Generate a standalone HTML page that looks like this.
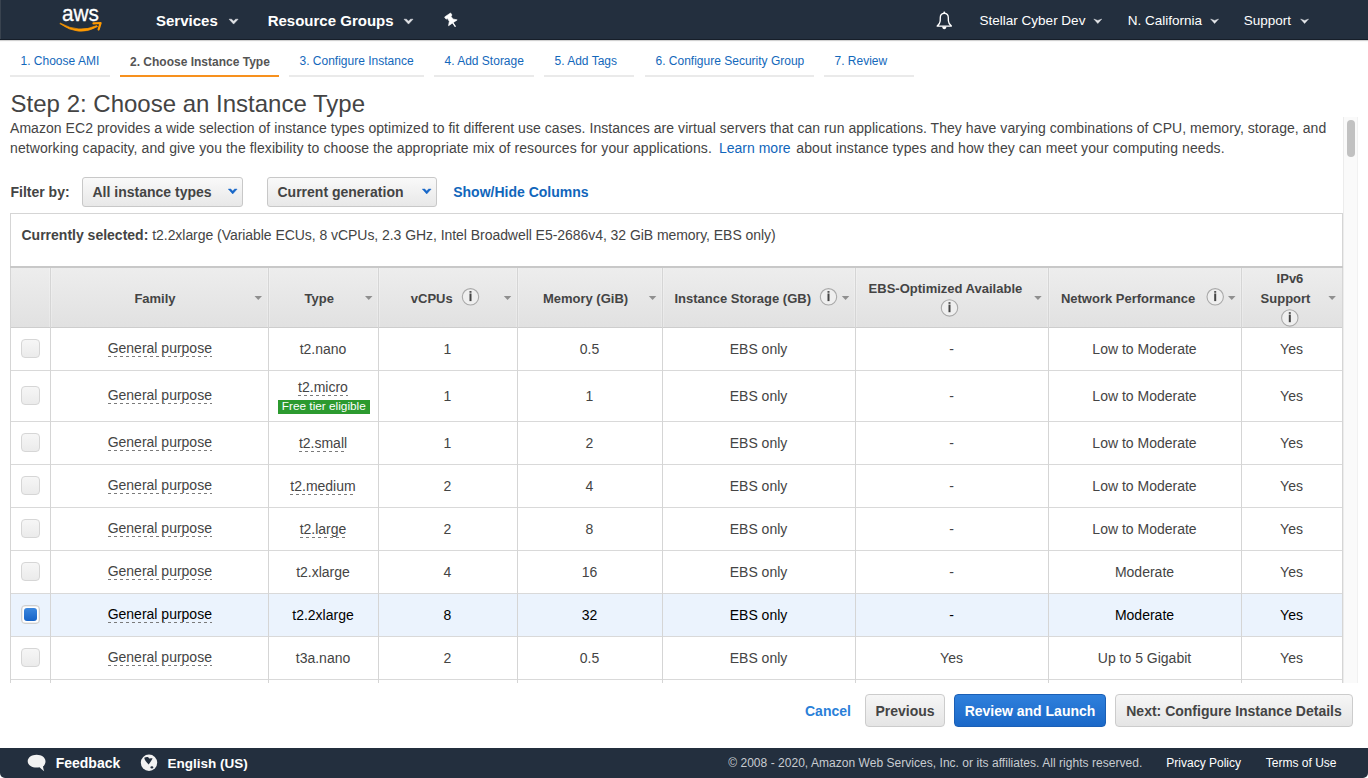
<!DOCTYPE html><html><head><meta charset="utf-8"><style>
*{margin:0;padding:0;box-sizing:border-box}
html,body{width:1368px;height:778px;overflow:hidden;background:#fff;font-family:"Liberation Sans", sans-serif}
.t{position:absolute;white-space:nowrap;line-height:1}
.c{text-align:center}
.b{position:absolute}
svg{position:absolute;overflow:visible}
.dash{background-image:linear-gradient(to right,#7a7a7a 50%,transparent 50%);background-size:6px 1px;background-repeat:repeat-x}
</style></head><body><div class="b" style="left:0px;top:0px;width:1368px;height:40px;background:#232f3e;border-bottom:1px solid #161e29;box-shadow:0 1px 1px rgba(0,0,0,0.18)"></div>
<div class="b" style="left:0px;top:0px;width:1px;height:39px;background:#39434f"></div>
<svg style="left:0;top:0" width="120" height="40">
<text x="62" y="20.8" fill="#fff" stroke="#fff" stroke-width="0.3" font-family="Liberation Sans" font-size="22.5" textLength="37" lengthAdjust="spacingAndGlyphs">aws</text>
<path d="M59.8 23.6 Q79 37.4 97.6 26.6 L96.8 25.6 Q79 33.6 60.4 23.2 Z" fill="#f90" stroke="#f90" stroke-width="0.7" stroke-linejoin="round"/>
<path d="M93.5 23.4 L100.6 23 L98.6 29.5" stroke="#f90" stroke-width="2.2" fill="none" stroke-linecap="round" stroke-linejoin="round"/>
</svg>
<div class="t" style="left:156px;top:13.30px;font-size:15px;font-weight:700;color:#fff;">Services</div>
<div class="t" style="left:267.7px;top:13.30px;font-size:15px;font-weight:700;color:#fff;">Resource Groups</div>
<svg style="left:0;top:0" width="1" height="1"><path d="M229.1 19.2 L231.6 19.2 L233.6 21.2 L235.6 19.2 L238.1 19.2 L233.6 24.1Z" fill="#e3e5e8" stroke="#e3e5e8" stroke-width="0.5" stroke-linejoin="round"/></svg>
<svg style="left:0;top:0" width="1" height="1"><path d="M404.0 19.2 L406.5 19.2 L408.5 21.2 L410.5 19.2 L413.0 19.2 L408.5 24.1Z" fill="#e3e5e8" stroke="#e3e5e8" stroke-width="0.5" stroke-linejoin="round"/></svg>
<svg style="left:0;top:0" width="1" height="1">
<g transform="translate(447.6,15.0) rotate(-34)">
<path d="M-3.6 0 L3.6 0 L3.6 2.6 L2.1 2.6 L2.1 6.2 L5.2 9.4 L-5.2 9.4 L-2.1 6.2 L-2.1 2.6 L-3.6 2.6Z" fill="#fff" stroke="#fff" stroke-width="0.6" stroke-linejoin="round"/>
<path d="M0 9.4 L0 13.6" stroke="#fff" stroke-width="1.4" stroke-linecap="round"/>
</g></svg>
<svg style="left:0;top:0" width="1" height="1">
<path d="M944.3 13.4 C941.5 13.4 940.3 15.2 940.3 17.6 L940.2 21 C940 23.6 938.6 25 937.2 26.1 L951.4 26.1 C950 25 948.6 23.6 948.4 21 L948.3 17.6 C948.3 15.2 947.1 13.4 944.3 13.4Z" stroke="#fff" stroke-width="1.35" fill="none" stroke-linejoin="round"/>
<path d="M942.2 26.5 L946.4 26.5 C946.4 28.2 945.5 29.2 944.3 29.2 C943.1 29.2 942.2 28.2 942.2 26.5Z" fill="#fff"/>
<circle cx="944.3" cy="12.6" r="1" fill="#fff"/>
</svg>
<div class="t" style="left:979.6px;top:13.97px;font-size:13.5px;font-weight:400;color:#fff;">Stellar Cyber Dev</div>
<div class="t" style="left:1127.7px;top:13.97px;font-size:13.5px;font-weight:400;color:#fff;">N. California</div>
<div class="t" style="left:1243.8px;top:13.97px;font-size:13.5px;font-weight:400;color:#fff;">Support</div>
<svg style="left:0;top:0" width="1" height="1"><path d="M1093.8 19 L1097.8 20.4 L1101.8 19 L1097.8 23.6Z" fill="#e6e8eb" stroke="#e6e8eb" stroke-width="0.4" stroke-linejoin="round"/></svg>
<svg style="left:0;top:0" width="1" height="1"><path d="M1210.6 19 L1214.6 20.4 L1218.6 19 L1214.6 23.6Z" fill="#e6e8eb" stroke="#e6e8eb" stroke-width="0.4" stroke-linejoin="round"/></svg>
<svg style="left:0;top:0" width="1" height="1"><path d="M1300.6 19 L1304.6 20.4 L1308.6 19 L1304.6 23.6Z" fill="#e6e8eb" stroke="#e6e8eb" stroke-width="0.4" stroke-linejoin="round"/></svg>
<div class="t" style="left:20.5px;top:54.84px;font-size:12px;font-weight:400;color:#1368bb;">1. Choose AMI</div>
<div class="b" style="left:10px;top:75px;width:100px;height:2px;background:#eaeaea"></div>
<div class="t" style="left:130px;top:56.24px;font-size:12px;font-weight:700;color:#555;">2. Choose Instance Type</div>
<div class="b" style="left:120px;top:75px;width:159px;height:2px;background:#f7911e"></div>
<div class="t" style="left:299.5px;top:54.84px;font-size:12px;font-weight:400;color:#1368bb;">3. Configure Instance</div>
<div class="b" style="left:289px;top:75px;width:135px;height:2px;background:#eaeaea"></div>
<div class="t" style="left:444.5px;top:54.84px;font-size:12px;font-weight:400;color:#1368bb;">4. Add Storage</div>
<div class="b" style="left:434px;top:75px;width:100px;height:2px;background:#eaeaea"></div>
<div class="t" style="left:554.5px;top:54.84px;font-size:12px;font-weight:400;color:#1368bb;">5. Add Tags</div>
<div class="b" style="left:544px;top:75px;width:90px;height:2px;background:#eaeaea"></div>
<div class="t" style="left:655.5px;top:54.84px;font-size:12px;font-weight:400;color:#1368bb;">6. Configure Security Group</div>
<div class="b" style="left:645px;top:75px;width:169px;height:2px;background:#eaeaea"></div>
<div class="t" style="left:834.5px;top:54.84px;font-size:12px;font-weight:400;color:#1368bb;">7. Review</div>
<div class="b" style="left:824px;top:75px;width:90px;height:2px;background:#eaeaea"></div>
<div class="t" style="left:10.6px;top:92.18px;font-size:24px;font-weight:400;color:#444;">Step 2: Choose an Instance Type</div>
<div class="t" style="left:10px;top:120.95px;font-size:14px;font-weight:400;color:#444;letter-spacing:0.05px">Amazon EC2 provides a wide selection of instance types optimized to fit different use cases. Instances are virtual servers that can run applications. They have varying combinations of CPU, memory, storage, and</div>
<div class="t" style="left:10px;top:141.15px;font-size:14px;font-weight:400;color:#444;letter-spacing:0.09px">networking capacity, and give you the flexibility to choose the appropriate mix of resources for your applications.</div>
<div class="t" style="left:719px;top:141.15px;font-size:14px;font-weight:400;color:#1166bb;">Learn more</div>
<div class="t" style="left:796.3px;top:141.15px;font-size:14px;font-weight:400;color:#444;letter-spacing:0.09px">about instance types and how they can meet your computing needs.</div>
<div class="t" style="left:10.5px;top:185.35px;font-size:14px;font-weight:700;color:#444;">Filter by:</div>
<div class="b" style="left:82px;top:177px;width:161px;height:30px;border:1px solid #c8c8c8;border-radius:3px;background:linear-gradient(#f9f9f9,#e8e8e8)"></div><div class="t" style="left:92.5px;top:185.35px;font-size:14px;font-weight:700;color:#444;">All instance types</div><svg style="left:0;top:0" width="1" height="1"><path d="M228.29999999999998 189.1 L230.7 189.1 L232.7 191 L234.7 189.1 L237.1 189.1 L232.7 193.9Z" fill="#1767c8" stroke="#1767c8" stroke-width="0.5" stroke-linejoin="round"/></svg>
<div class="b" style="left:267px;top:177px;width:170px;height:30px;border:1px solid #c8c8c8;border-radius:3px;background:linear-gradient(#f9f9f9,#e8e8e8)"></div><div class="t" style="left:277.5px;top:185.35px;font-size:14px;font-weight:700;color:#444;">Current generation</div><svg style="left:0;top:0" width="1" height="1"><path d="M422.3 189.1 L424.7 189.1 L426.7 191 L428.7 189.1 L431.09999999999997 189.1 L426.7 193.9Z" fill="#1767c8" stroke="#1767c8" stroke-width="0.5" stroke-linejoin="round"/></svg>
<div class="t" style="left:453.2px;top:185.35px;font-size:14px;font-weight:700;color:#1166bb;">Show/Hide Columns</div>
<div class="b" style="left:10px;top:213px;width:1333px;height:470px;border:1px solid #d5d5d5;border-bottom:none"></div>
<div class="t" style="left:21.5px;top:228.25px;font-size:14px;font-weight:400;color:#444;"><b>Currently selected:</b> <span style="letter-spacing:-0.05px">t2.2xlarge (Variable ECUs, 8 vCPUs, 2.3 GHz, Intel Broadwell E5-2686v4, 32 GiB memory, EBS only)</span></div>
<div class="b" style="left:10px;top:266px;width:1333px;height:62px;background:linear-gradient(#ededed,#e1e1e1);border-top:2px solid #c8c8c8;border-bottom:1px solid #cdcdcd"></div>
<div class="t" style="left:134.4px;top:292.00px;font-size:13px;font-weight:700;color:#444;">Family</div>
<svg style="left:0;top:0" width="1" height="1"><path d="M254.5 296 L262.0 296 L258.25 300Z" fill="#8f8f8f"/></svg>
<div class="t" style="left:304.6px;top:292.00px;font-size:13px;font-weight:700;color:#444;">Type</div>
<svg style="left:0;top:0" width="1" height="1"><path d="M365 296 L372.5 296 L368.75 300Z" fill="#8f8f8f"/></svg>
<div class="t" style="left:410.8px;top:292.00px;font-size:13px;font-weight:700;color:#444;">vCPUs</div>
<svg style="left:0;top:0" width="1" height="1"><circle cx="470.5" cy="296.8" r="8.2" fill="#efefef" stroke="#a9a9a9" stroke-width="1.1"/><rect x="469.5" y="291.1" width="2" height="1.6" fill="#444"/><rect x="469.5" y="293.5" width="2" height="7.6" fill="#444"/></svg>
<svg style="left:0;top:0" width="1" height="1"><path d="M503.8 296 L511.3 296 L507.55 300Z" fill="#8f8f8f"/></svg>
<div class="t" style="left:542.9px;top:292.00px;font-size:13px;font-weight:700;color:#444;">Memory (GiB)</div>
<svg style="left:0;top:0" width="1" height="1"><path d="M648.8 296 L656.3 296 L652.55 300Z" fill="#8f8f8f"/></svg>
<div class="t" style="left:674.5px;top:292.00px;font-size:13px;font-weight:700;color:#444;">Instance Storage (GB)</div>
<svg style="left:0;top:0" width="1" height="1"><circle cx="828.5" cy="296.8" r="8.2" fill="#efefef" stroke="#a9a9a9" stroke-width="1.1"/><rect x="827.5" y="291.1" width="2" height="1.6" fill="#444"/><rect x="827.5" y="293.5" width="2" height="7.6" fill="#444"/></svg>
<svg style="left:0;top:0" width="1" height="1"><path d="M841.8 296 L849.3 296 L845.55 300Z" fill="#8f8f8f"/></svg>
<div class="t" style="left:868.6px;top:281.90px;font-size:13px;font-weight:700;color:#444;">EBS-Optimized Available</div>
<svg style="left:0;top:0" width="1" height="1"><circle cx="949.5" cy="307.9" r="8.2" fill="#efefef" stroke="#a9a9a9" stroke-width="1.1"/><rect x="948.5" y="302.2" width="2" height="1.6" fill="#444"/><rect x="948.5" y="304.59999999999997" width="2" height="7.6" fill="#444"/></svg>
<svg style="left:0;top:0" width="1" height="1"><path d="M1034.2 296 L1041.7 296 L1037.95 300Z" fill="#8f8f8f"/></svg>
<div class="t" style="left:1060.9px;top:292.00px;font-size:13px;font-weight:700;color:#444;">Network Performance</div>
<svg style="left:0;top:0" width="1" height="1"><circle cx="1215.2" cy="296.8" r="8.2" fill="#efefef" stroke="#a9a9a9" stroke-width="1.1"/><rect x="1214.2" y="291.1" width="2" height="1.6" fill="#444"/><rect x="1214.2" y="293.5" width="2" height="7.6" fill="#444"/></svg>
<svg style="left:0;top:0" width="1" height="1"><path d="M1228 296 L1235.5 296 L1231.75 300Z" fill="#8f8f8f"/></svg>
<div class="t" style="left:1276.6px;top:272.30px;font-size:13px;font-weight:700;color:#444;">IPv6</div>
<div class="t" style="left:1260.6px;top:292.20px;font-size:13px;font-weight:700;color:#444;">Support</div>
<svg style="left:0;top:0" width="1" height="1"><circle cx="1289.8" cy="317.9" r="8.2" fill="#efefef" stroke="#a9a9a9" stroke-width="1.1"/><rect x="1288.8" y="312.2" width="2" height="1.6" fill="#444"/><rect x="1288.8" y="314.59999999999997" width="2" height="7.6" fill="#444"/></svg>
<svg style="left:0;top:0" width="1" height="1"><path d="M1328.4 296 L1335.9 296 L1332.15 300Z" fill="#8f8f8f"/></svg>
<div class="b" style="left:0;top:117;width:1343px;height:566px;overflow:hidden;top:117px"><div class="b" style="left:0;top:-117px;width:1368px;height:800px"><div class="b" style="left:10px;top:370px;width:1333px;height:1px;background:#d9d9d9"></div><div class="b" style="left:21px;top:339px;width:19px;height:19px;border:1.5px solid #d6d6d6;border-radius:4px;background:linear-gradient(#f6f6f6,#ebebeb)"></div><div class="t c" style="left:-140.2px;width:600px;top:340.75px;font-size:14px;font-weight:400;color:#444;">General purpose</div><div class="b dash" style="left:108px;top:356px;width:104px;height:1px;"></div><div class="t c" style="left:23.0px;width:600px;top:341.75px;font-size:14px;font-weight:400;color:#444;">t2.nano</div><div class="t c" style="left:147.5px;width:600px;top:341.75px;font-size:14px;font-weight:400;color:#444;">1</div><div class="t c" style="left:289.5px;width:600px;top:341.75px;font-size:14px;font-weight:400;color:#444;">0.5</div><div class="t c" style="left:458.5px;width:600px;top:341.75px;font-size:14px;font-weight:400;color:#444;">EBS only</div><div class="t c" style="left:651.5px;width:600px;top:341.75px;font-size:14px;font-weight:400;color:#444;">-</div><div class="t c" style="left:844.5px;width:600px;top:341.75px;font-size:14px;font-weight:400;color:#444;">Low to Moderate</div><div class="t c" style="left:991.5px;width:600px;top:341.75px;font-size:14px;font-weight:400;color:#444;">Yes</div><div class="b" style="left:10px;top:421px;width:1333px;height:1px;background:#d9d9d9"></div><div class="b" style="left:21px;top:386px;width:19px;height:19px;border:1.5px solid #d6d6d6;border-radius:4px;background:linear-gradient(#f6f6f6,#ebebeb)"></div><div class="t c" style="left:-140.2px;width:600px;top:387.75px;font-size:14px;font-weight:400;color:#444;">General purpose</div><div class="b dash" style="left:108px;top:403px;width:104px;height:1px;"></div><div class="t c" style="left:23.0px;width:600px;top:380.25px;font-size:14px;font-weight:400;color:#444;">t2.micro</div><div class="b dash" style="left:298.0px;top:395px;width:50px;height:1px;"></div><div class="b" style="left:278px;top:400px;width:92px;height:14px;background:#2c9a2f"></div><div class="t c" style="left:23.80000000000001px;width:600px;top:401.21px;font-size:11.8px;font-weight:400;color:#fff;">Free tier eligible</div><div class="t c" style="left:147.5px;width:600px;top:388.75px;font-size:14px;font-weight:400;color:#444;">1</div><div class="t c" style="left:289.5px;width:600px;top:388.75px;font-size:14px;font-weight:400;color:#444;">1</div><div class="t c" style="left:458.5px;width:600px;top:388.75px;font-size:14px;font-weight:400;color:#444;">EBS only</div><div class="t c" style="left:651.5px;width:600px;top:388.75px;font-size:14px;font-weight:400;color:#444;">-</div><div class="t c" style="left:844.5px;width:600px;top:388.75px;font-size:14px;font-weight:400;color:#444;">Low to Moderate</div><div class="t c" style="left:991.5px;width:600px;top:388.75px;font-size:14px;font-weight:400;color:#444;">Yes</div><div class="b" style="left:10px;top:464px;width:1333px;height:1px;background:#d9d9d9"></div><div class="b" style="left:21px;top:433px;width:19px;height:19px;border:1.5px solid #d6d6d6;border-radius:4px;background:linear-gradient(#f6f6f6,#ebebeb)"></div><div class="t c" style="left:-140.2px;width:600px;top:434.75px;font-size:14px;font-weight:400;color:#444;">General purpose</div><div class="b dash" style="left:108px;top:450px;width:104px;height:1px;"></div><div class="t c" style="left:23.0px;width:600px;top:435.75px;font-size:14px;font-weight:400;color:#444;">t2.small</div><div class="b dash" style="left:299px;top:451px;width:48px;height:1px;"></div><div class="t c" style="left:147.5px;width:600px;top:435.75px;font-size:14px;font-weight:400;color:#444;">1</div><div class="t c" style="left:289.5px;width:600px;top:435.75px;font-size:14px;font-weight:400;color:#444;">2</div><div class="t c" style="left:458.5px;width:600px;top:435.75px;font-size:14px;font-weight:400;color:#444;">EBS only</div><div class="t c" style="left:651.5px;width:600px;top:435.75px;font-size:14px;font-weight:400;color:#444;">-</div><div class="t c" style="left:844.5px;width:600px;top:435.75px;font-size:14px;font-weight:400;color:#444;">Low to Moderate</div><div class="t c" style="left:991.5px;width:600px;top:435.75px;font-size:14px;font-weight:400;color:#444;">Yes</div><div class="b" style="left:10px;top:507px;width:1333px;height:1px;background:#d9d9d9"></div><div class="b" style="left:21px;top:476px;width:19px;height:19px;border:1.5px solid #d6d6d6;border-radius:4px;background:linear-gradient(#f6f6f6,#ebebeb)"></div><div class="t c" style="left:-140.2px;width:600px;top:477.75px;font-size:14px;font-weight:400;color:#444;">General purpose</div><div class="b dash" style="left:108px;top:493px;width:104px;height:1px;"></div><div class="t c" style="left:23.0px;width:600px;top:478.75px;font-size:14px;font-weight:400;color:#444;">t2.medium</div><div class="b dash" style="left:290px;top:494px;width:65px;height:1px;"></div><div class="t c" style="left:147.5px;width:600px;top:478.75px;font-size:14px;font-weight:400;color:#444;">2</div><div class="t c" style="left:289.5px;width:600px;top:478.75px;font-size:14px;font-weight:400;color:#444;">4</div><div class="t c" style="left:458.5px;width:600px;top:478.75px;font-size:14px;font-weight:400;color:#444;">EBS only</div><div class="t c" style="left:651.5px;width:600px;top:478.75px;font-size:14px;font-weight:400;color:#444;">-</div><div class="t c" style="left:844.5px;width:600px;top:478.75px;font-size:14px;font-weight:400;color:#444;">Low to Moderate</div><div class="t c" style="left:991.5px;width:600px;top:478.75px;font-size:14px;font-weight:400;color:#444;">Yes</div><div class="b" style="left:10px;top:550px;width:1333px;height:1px;background:#d9d9d9"></div><div class="b" style="left:21px;top:519px;width:19px;height:19px;border:1.5px solid #d6d6d6;border-radius:4px;background:linear-gradient(#f6f6f6,#ebebeb)"></div><div class="t c" style="left:-140.2px;width:600px;top:520.75px;font-size:14px;font-weight:400;color:#444;">General purpose</div><div class="b dash" style="left:108px;top:536px;width:104px;height:1px;"></div><div class="t c" style="left:23.0px;width:600px;top:521.75px;font-size:14px;font-weight:400;color:#444;">t2.large</div><div class="b dash" style="left:300px;top:537px;width:47px;height:1px;"></div><div class="t c" style="left:147.5px;width:600px;top:521.75px;font-size:14px;font-weight:400;color:#444;">2</div><div class="t c" style="left:289.5px;width:600px;top:521.75px;font-size:14px;font-weight:400;color:#444;">8</div><div class="t c" style="left:458.5px;width:600px;top:521.75px;font-size:14px;font-weight:400;color:#444;">EBS only</div><div class="t c" style="left:651.5px;width:600px;top:521.75px;font-size:14px;font-weight:400;color:#444;">-</div><div class="t c" style="left:844.5px;width:600px;top:521.75px;font-size:14px;font-weight:400;color:#444;">Low to Moderate</div><div class="t c" style="left:991.5px;width:600px;top:521.75px;font-size:14px;font-weight:400;color:#444;">Yes</div><div class="b" style="left:10px;top:593px;width:1333px;height:1px;background:#d9d9d9"></div><div class="b" style="left:21px;top:562px;width:19px;height:19px;border:1.5px solid #d6d6d6;border-radius:4px;background:linear-gradient(#f6f6f6,#ebebeb)"></div><div class="t c" style="left:-140.2px;width:600px;top:563.75px;font-size:14px;font-weight:400;color:#444;">General purpose</div><div class="b dash" style="left:108px;top:579px;width:104px;height:1px;"></div><div class="t c" style="left:23.0px;width:600px;top:564.75px;font-size:14px;font-weight:400;color:#444;">t2.xlarge</div><div class="t c" style="left:147.5px;width:600px;top:564.75px;font-size:14px;font-weight:400;color:#444;">4</div><div class="t c" style="left:289.5px;width:600px;top:564.75px;font-size:14px;font-weight:400;color:#444;">16</div><div class="t c" style="left:458.5px;width:600px;top:564.75px;font-size:14px;font-weight:400;color:#444;">EBS only</div><div class="t c" style="left:651.5px;width:600px;top:564.75px;font-size:14px;font-weight:400;color:#444;">-</div><div class="t c" style="left:844.5px;width:600px;top:564.75px;font-size:14px;font-weight:400;color:#444;">Moderate</div><div class="t c" style="left:991.5px;width:600px;top:564.75px;font-size:14px;font-weight:400;color:#444;">Yes</div><div class="b" style="left:11px;top:594px;width:1331px;height:42px;background:#ebf3fd"></div><div class="b" style="left:10px;top:636px;width:1333px;height:1px;background:#d9d9d9"></div><div class="b" style="left:21px;top:605px;width:19px;height:19px;border:1px solid #cfcfcf;border-radius:4px;background:#fff;box-shadow:inset 0 0 0 0.5px #e0e0e0"></div><div class="b" style="left:24px;top:608px;width:13px;height:13px;border-radius:3px;background:linear-gradient(#3b87de,#1663c7)"></div><div class="t c" style="left:-140.2px;width:600px;top:606.75px;font-size:14px;font-weight:400;color:#000;">General purpose</div><div class="b dash" style="left:108px;top:622px;width:104px;height:1px;"></div><div class="t c" style="left:23.0px;width:600px;top:607.75px;font-size:14px;font-weight:400;color:#000;">t2.2xlarge</div><div class="t c" style="left:147.5px;width:600px;top:607.75px;font-size:14px;font-weight:400;color:#000;">8</div><div class="t c" style="left:289.5px;width:600px;top:607.75px;font-size:14px;font-weight:400;color:#000;">32</div><div class="t c" style="left:458.5px;width:600px;top:607.75px;font-size:14px;font-weight:400;color:#000;">EBS only</div><div class="t c" style="left:651.5px;width:600px;top:607.75px;font-size:14px;font-weight:400;color:#000;">-</div><div class="t c" style="left:844.5px;width:600px;top:607.75px;font-size:14px;font-weight:400;color:#000;">Moderate</div><div class="t c" style="left:991.5px;width:600px;top:607.75px;font-size:14px;font-weight:400;color:#000;">Yes</div><div class="b" style="left:10px;top:679px;width:1333px;height:1px;background:#d9d9d9"></div><div class="b" style="left:21px;top:648px;width:19px;height:19px;border:1.5px solid #d6d6d6;border-radius:4px;background:linear-gradient(#f6f6f6,#ebebeb)"></div><div class="t c" style="left:-140.2px;width:600px;top:649.75px;font-size:14px;font-weight:400;color:#444;">General purpose</div><div class="b dash" style="left:108px;top:665px;width:104px;height:1px;"></div><div class="t c" style="left:23.0px;width:600px;top:650.75px;font-size:14px;font-weight:400;color:#444;">t3a.nano</div><div class="t c" style="left:147.5px;width:600px;top:650.75px;font-size:14px;font-weight:400;color:#444;">2</div><div class="t c" style="left:289.5px;width:600px;top:650.75px;font-size:14px;font-weight:400;color:#444;">0.5</div><div class="t c" style="left:458.5px;width:600px;top:650.75px;font-size:14px;font-weight:400;color:#444;">EBS only</div><div class="t c" style="left:651.5px;width:600px;top:650.75px;font-size:14px;font-weight:400;color:#444;">Yes</div><div class="t c" style="left:844.5px;width:600px;top:650.75px;font-size:14px;font-weight:400;color:#444;">Up to 5 Gigabit</div><div class="t c" style="left:991.5px;width:600px;top:650.75px;font-size:14px;font-weight:400;color:#444;">Yes</div><div class="b" style="left:10px;top:722px;width:1333px;height:1px;background:#d9d9d9"></div><div class="b" style="left:21px;top:691px;width:19px;height:19px;border:1.5px solid #d6d6d6;border-radius:4px;background:linear-gradient(#f6f6f6,#ebebeb)"></div><div class="t c" style="left:-140.2px;width:600px;top:692.75px;font-size:14px;font-weight:400;color:#444;">General purpose</div><div class="b dash" style="left:108px;top:708px;width:104px;height:1px;"></div><div class="t c" style="left:23.0px;width:600px;top:693.75px;font-size:14px;font-weight:400;color:#444;">t3a.micro</div><div class="t c" style="left:147.5px;width:600px;top:693.75px;font-size:14px;font-weight:400;color:#444;">2</div><div class="t c" style="left:289.5px;width:600px;top:693.75px;font-size:14px;font-weight:400;color:#444;">1</div><div class="t c" style="left:458.5px;width:600px;top:693.75px;font-size:14px;font-weight:400;color:#444;">EBS only</div><div class="t c" style="left:651.5px;width:600px;top:693.75px;font-size:14px;font-weight:400;color:#444;">Yes</div><div class="t c" style="left:844.5px;width:600px;top:693.75px;font-size:14px;font-weight:400;color:#444;">Up to 5 Gigabit</div><div class="t c" style="left:991.5px;width:600px;top:693.75px;font-size:14px;font-weight:400;color:#444;">Yes</div><div class="b" style="left:10px;top:268px;width:1px;height:418px;background:#d5d5d5"></div><div class="b" style="left:49px;top:268px;width:3px;height:59px;background:linear-gradient(to right,rgba(255,255,255,0.45),rgba(255,255,255,0) 33%,rgba(255,255,255,0) 67%,rgba(255,255,255,0.45))"></div><div class="b" style="left:50px;top:268px;width:1px;height:418px;background:#d5d5d5"></div><div class="b" style="left:267px;top:268px;width:3px;height:59px;background:linear-gradient(to right,rgba(255,255,255,0.45),rgba(255,255,255,0) 33%,rgba(255,255,255,0) 67%,rgba(255,255,255,0.45))"></div><div class="b" style="left:268px;top:268px;width:1px;height:418px;background:#d5d5d5"></div><div class="b" style="left:377px;top:268px;width:3px;height:59px;background:linear-gradient(to right,rgba(255,255,255,0.45),rgba(255,255,255,0) 33%,rgba(255,255,255,0) 67%,rgba(255,255,255,0.45))"></div><div class="b" style="left:378px;top:268px;width:1px;height:418px;background:#d5d5d5"></div><div class="b" style="left:516px;top:268px;width:3px;height:59px;background:linear-gradient(to right,rgba(255,255,255,0.45),rgba(255,255,255,0) 33%,rgba(255,255,255,0) 67%,rgba(255,255,255,0.45))"></div><div class="b" style="left:517px;top:268px;width:1px;height:418px;background:#d5d5d5"></div><div class="b" style="left:661px;top:268px;width:3px;height:59px;background:linear-gradient(to right,rgba(255,255,255,0.45),rgba(255,255,255,0) 33%,rgba(255,255,255,0) 67%,rgba(255,255,255,0.45))"></div><div class="b" style="left:662px;top:268px;width:1px;height:418px;background:#d5d5d5"></div><div class="b" style="left:854px;top:268px;width:3px;height:59px;background:linear-gradient(to right,rgba(255,255,255,0.45),rgba(255,255,255,0) 33%,rgba(255,255,255,0) 67%,rgba(255,255,255,0.45))"></div><div class="b" style="left:855px;top:268px;width:1px;height:418px;background:#d5d5d5"></div><div class="b" style="left:1047px;top:268px;width:3px;height:59px;background:linear-gradient(to right,rgba(255,255,255,0.45),rgba(255,255,255,0) 33%,rgba(255,255,255,0) 67%,rgba(255,255,255,0.45))"></div><div class="b" style="left:1048px;top:268px;width:1px;height:418px;background:#d5d5d5"></div><div class="b" style="left:1240px;top:268px;width:3px;height:59px;background:linear-gradient(to right,rgba(255,255,255,0.45),rgba(255,255,255,0) 33%,rgba(255,255,255,0) 67%,rgba(255,255,255,0.45))"></div><div class="b" style="left:1241px;top:268px;width:1px;height:418px;background:#d5d5d5"></div><div class="b" style="left:1342px;top:268px;width:1px;height:418px;background:#d5d5d5"></div></div></div>
<div class="b" style="left:1343px;top:117px;width:15px;height:566px;background:#fafafa;border-left:1px solid #ececec;border-right:1px solid #f1f1f1"></div>
<div class="b" style="left:1347px;top:120px;width:8px;height:37px;background:#c1c1c1;border-radius:4px"></div>
<div class="t" style="left:805px;top:704.15px;font-size:14px;font-weight:700;color:#2a7fd8;">Cancel</div>
<div class="b" style="left:865px;top:694px;width:80px;height:33px;border:1px solid #cccccc;border-radius:4px;background:linear-gradient(#f6f6f6,#e5e5e5)"></div><div class="t c" style="left:605.0px;width:600px;top:704.15px;font-size:14px;font-weight:700;color:#444;">Previous</div>
<div class="b" style="left:954px;top:694px;width:152px;height:33px;border:1px solid #1b5fb5;border-radius:4px;background:linear-gradient(#2f80dc,#1a68c8)"></div><div class="t c" style="left:730.0px;width:600px;top:704.15px;font-size:14px;font-weight:700;color:#fff;">Review and Launch</div>
<div class="b" style="left:1115px;top:694px;width:238px;height:33px;border:1px solid #cccccc;border-radius:4px;background:linear-gradient(#f6f6f6,#e5e5e5)"></div><div class="t c" style="left:934.0px;width:600px;top:704.15px;font-size:14px;font-weight:700;color:#444;">Next: Configure Instance Details</div>
<div class="b" style="left:0px;top:748px;width:1368px;height:30px;background:#232f3e;border-radius:0 0 5px 5px"></div>
<svg style="left:0;top:0" width="1" height="1">
<path d="M36.6 754.8 C31.6 754.8 27.7 757.6 27.7 761.2 C27.7 764.8 31.6 767.6 36.6 767.6 C37.6 767.6 38.6 767.5 39.5 767.3 C40.8 768.5 42.5 770 44.2 771.2 C43.6 769.8 43.2 768.3 43 766.6 C44.6 765.4 45.5 763.4 45.5 761.2 C45.5 757.6 41.6 754.8 36.6 754.8Z" fill="#f2f2f2"/>
<circle cx="149" cy="762.8" r="8.2" fill="#f2f2f2"/>
<path d="M144.2 757.8 C145.5 757.1 147 756.9 148.3 757.2 C148.8 758 149.3 758.6 150 758.5 C150.8 758.1 151.7 758 152.6 758.4 C151.5 760.5 150 762.5 148.7 764.6 C147.6 763.3 146.5 762.2 145.6 761 C145 760 144.4 759 144.2 757.8Z" fill="#232f3e"/>
<ellipse cx="151.9" cy="767.4" rx="1.5" ry="1.1" fill="#232f3e"/>
</svg>
<div class="t" style="left:55.7px;top:756.15px;font-size:14px;font-weight:700;color:#fff;">Feedback</div>
<div class="t" style="left:167.4px;top:756.57px;font-size:13.5px;font-weight:700;color:#fff;">English (US)</div>
<div class="t" style="left:728.2px;top:756.94px;font-size:12px;font-weight:400;color:#c8ccd1;letter-spacing:0.035px">© 2008 - 2020, Amazon Web Services, Inc. or its affiliates. All rights reserved.</div>
<div class="t" style="left:1166.3px;top:756.94px;font-size:12px;font-weight:400;color:#fff;">Privacy Policy</div>
<div class="t" style="left:1265.8px;top:756.94px;font-size:12px;font-weight:400;color:#fff;">Terms of Use</div></body></html>
